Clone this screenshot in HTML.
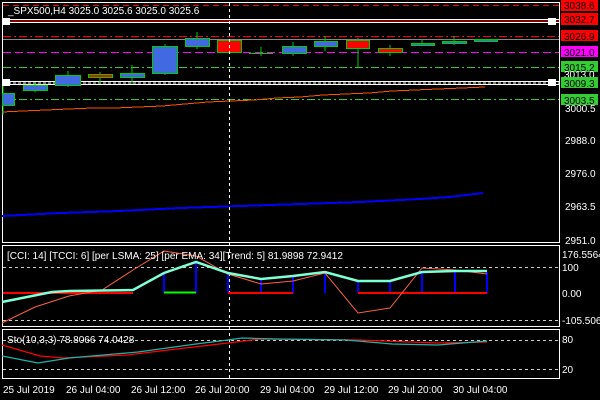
<!DOCTYPE html><html><head><style>body{margin:0;background:#000;width:600px;height:400px;overflow:hidden}svg{display:block}text{font-family:"Liberation Sans",sans-serif;font-size:10px;fill:#fff}</style></head><body>
<svg width="600" height="400" viewBox="0 0 600 400" shape-rendering="crispEdges">
<rect width="600" height="400" fill="#000"/>
<rect x="2.5" y="2.5" width="557" height="240" fill="none" stroke="#fff"/>
<rect x="2.5" y="245.5" width="557" height="81" fill="none" stroke="#fff"/>
<rect x="2.5" y="329.5" width="557" height="49" fill="none" stroke="#fff"/>
<line x1="3" y1="5.5" x2="559" y2="5.5" stroke="#f00" stroke-dasharray="6,4"/>
<line x1="3" y1="19.5" x2="559" y2="19.5" stroke="#fff"/>
<line x1="3" y1="21" x2="559" y2="21" stroke="#f00"/>
<line x1="3" y1="22.5" x2="559" y2="22.5" stroke="#fff"/>
<rect x="2" y="18" width="8" height="7" fill="#fff"/><rect x="548" y="18" width="8" height="7" fill="#fff"/>
<line x1="3" y1="36.5" x2="559" y2="36.5" stroke="#f00" stroke-dasharray="8,3,2,3"/>
<line x1="3" y1="39.5" x2="559" y2="39.5" stroke="#888"/>
<line x1="3" y1="52.5" x2="559" y2="52.5" stroke="#f0f" stroke-dasharray="8,4"/>
<line x1="3" y1="67.5" x2="559" y2="67.5" stroke="#3c3" stroke-dasharray="8,3,2,3"/>
<line x1="3" y1="81.5" x2="559" y2="81.5" stroke="#fff"/>
<line x1="3" y1="83" x2="559" y2="83" stroke="#fff" stroke-dasharray="3,2"/>
<line x1="3" y1="84.5" x2="559" y2="84.5" stroke="#fff"/>
<rect x="2" y="79" width="8" height="7" fill="#fff"/><rect x="548" y="79" width="8" height="7" fill="#fff"/>
<line x1="3" y1="99.5" x2="559" y2="99.5" stroke="#3c3" stroke-dasharray="8,3,2,3"/>
<polyline points="2,112 23,111 46,110 69,109 92,108 115,108 138,107 162,106 185,104 208,102 231,101 254,100 277,98 300,97 323,95 346,94 369,93 392,91 415,90 438,89 462,88 485,87" fill="none" stroke="#ff5000" stroke-width="1"/>
<polyline points="2,216 60,213 120,211 180,208 240,206 300,204 360,202 420,199 450,197 483,193" fill="none" stroke="#00f" stroke-width="2"/>
<g stroke="#0c0" stroke-width="1">
<line x1="3" y1="86" x2="3" y2="115"/><rect x="2.5" y="93.5" width="12" height="12" fill="#4169e1"/>
<line x1="35" y1="82" x2="35" y2="92"/><rect x="23.5" y="85.5" width="24" height="5" fill="#4169e1"/>
<line x1="68" y1="71" x2="68" y2="87"/><rect x="55.5" y="75.5" width="25" height="10" fill="#4169e1"/>
<line x1="100" y1="72" x2="100" y2="84"/><rect x="88.5" y="74.5" width="24" height="3" fill="#f00"/>
<line x1="132" y1="65" x2="132" y2="84"/><rect x="120.5" y="73.5" width="24" height="4" fill="#4169e1"/>
<line x1="165" y1="44" x2="165" y2="75"/><rect x="152.5" y="46.5" width="25" height="27" fill="#4169e1"/>
<line x1="197" y1="32" x2="197" y2="49"/><rect x="185.5" y="38.5" width="24" height="8" fill="#4169e1"/>
<rect x="217.5" y="40.5" width="24" height="12" fill="#f00"/>
<line x1="261" y1="47" x2="261" y2="56"/><line x1="249" y1="53.5" x2="273" y2="53.5"/>
<line x1="293" y1="42" x2="293" y2="56"/><rect x="282.5" y="46.5" width="24" height="7" fill="#4169e1"/>
<line x1="325" y1="36" x2="325" y2="51"/><rect x="314.5" y="41.5" width="23" height="5" fill="#4169e1"/>
<line x1="358" y1="38" x2="358" y2="68"/><rect x="346.5" y="40.5" width="23" height="8" fill="#f00"/>
<line x1="390" y1="45" x2="390" y2="56"/><rect x="378.5" y="48.5" width="24" height="4" fill="#f00"/>
<line x1="422" y1="40" x2="422" y2="46"/><rect x="411.5" y="43.5" width="23" height="2" fill="#4169e1"/>
<line x1="454" y1="36" x2="454" y2="45"/><rect x="442.5" y="41.5" width="24" height="2" fill="#4169e1"/>
<rect x="474.5" y="39.5" width="23" height="2" fill="#4169e1"/>
</g>
<line x1="229.5" y1="3" x2="229.5" y2="378" stroke="#fff" stroke-dasharray="3,3"/>
<text x="8" y="14">_SPX500,H4  3025.0 3025.6 3025.0 3025.6</text>
<g>
<rect x="561" y="0" width="37" height="11" fill="#f00"/><text x="564" y="9" style="fill:#000">3038.6</text>
<rect x="561" y="13" width="37" height="12" fill="#f00"/><text x="564" y="23" style="fill:#000">3032.7</text>
<rect x="561" y="30" width="37" height="11" fill="#f00"/><text x="564" y="40" style="fill:#000">3026.9</text>
<rect x="561" y="46" width="37" height="11" fill="#f0f"/><text x="564" y="56" style="fill:#000">3021.0</text>
<rect x="561" y="61" width="37" height="11" fill="#3c3"/><text x="564" y="71" style="fill:#000">3015.2</text>
<text x="564" y="78">3013.0</text>
<rect x="561" y="77" width="37" height="11" fill="#3c3"/><text x="564" y="87" style="fill:#000">3009.3</text>
<rect x="561" y="94" width="37" height="11" fill="#3c3"/><text x="564" y="104" style="fill:#000">3003.5</text>
<text x="565" y="112">3000.5</text>
<text x="565" y="144">2988.0</text>
<text x="565" y="177">2976.0</text>
<text x="565" y="210">2963.5</text>
<text x="565" y="244">2951.0</text>
</g>
<line x1="3" y1="267.5" x2="559" y2="267.5" stroke="#ccc" stroke-dasharray="3,3"/>
<line x1="3" y1="320.5" x2="559" y2="320.5" stroke="#ccc" stroke-dasharray="3,3"/>
<g stroke="#00f" stroke-width="2">
<line x1="164" y1="273" x2="164" y2="293"/><line x1="196" y1="262" x2="196" y2="293"/><line x1="228" y1="273" x2="228" y2="293"/><line x1="261" y1="279" x2="261" y2="293"/><line x1="293" y1="277" x2="293" y2="293"/><line x1="325" y1="273" x2="325" y2="293"/><line x1="358" y1="281" x2="358" y2="293"/><line x1="390" y1="281" x2="390" y2="293"/><line x1="422" y1="273" x2="422" y2="293"/><line x1="455" y1="272" x2="455" y2="293"/><line x1="487" y1="272" x2="487" y2="293"/>
</g>
<g stroke="#f00" stroke-width="2"><line x1="3" y1="293" x2="133" y2="293"/><line x1="228" y1="293" x2="293" y2="293"/><line x1="358" y1="293" x2="487" y2="293"/></g>
<line x1="164" y1="292.5" x2="196" y2="292.5" stroke="#0f0" stroke-width="2"/>
<polyline shape-rendering="auto" points="2,323 35,307 69,296 102,290 133,270 164,251 196,256 228,274 261,284 293,281 325,273 358,313 390,308 422,268 455,270 487,274" fill="none" stroke="#ff6040" stroke-width="1"/>
<polyline shape-rendering="auto" points="2,302 52,292 69,291 133,290 164,273 196,262 228,273 261,279 293,276 325,272 358,281 390,281 422,272 455,271 487,271" fill="none" stroke="#7fffd4" stroke-width="2.5"/>
<text x="7" y="259">[CCI: 14] [TCCI: 6] [per LSMA: 25] [per EMA: 34][Trend: 5]  81.9898 72.9412</text>
<text x="562" y="258">176.5564</text><text x="562" y="271">100</text><text x="562" y="297">0.00</text><text x="562" y="324">-105.506</text>
<line x1="3" y1="340.5" x2="559" y2="340.5" stroke="#ccc" stroke-dasharray="3,3"/>
<line x1="3" y1="369.5" x2="559" y2="369.5" stroke="#ccc" stroke-dasharray="3,3"/>
<polyline shape-rendering="auto" points="2,345 40,356 63,358 127,355 185,348 228,343 260,339 358,340 438,343 487,342" fill="none" stroke="#f00" stroke-width="1.2"/>
<polyline shape-rendering="auto" points="2,356 38,363 69,358 138,352 196,344 228,340 242,338 277,339 346,340 392,344 438,345 487,341" fill="none" stroke="#20b2aa" stroke-width="1.2"/>
<text x="7" y="343">Sto(10,3,3) 78.8066 74.0428</text>
<text x="562" y="343">80</text><text x="562" y="373">20</text>
<text x="3" y="393">25 Jul 2019</text><text x="66" y="393">26 Jul 04:00</text><text x="131" y="393">26 Jul 12:00</text><text x="195" y="393">26 Jul 20:00</text><text x="260" y="393">29 Jul 04:00</text><text x="324" y="393">29 Jul 12:00</text><text x="388" y="393">29 Jul 20:00</text><text x="453" y="393">30 Jul 04:00</text>
</svg></body></html>
